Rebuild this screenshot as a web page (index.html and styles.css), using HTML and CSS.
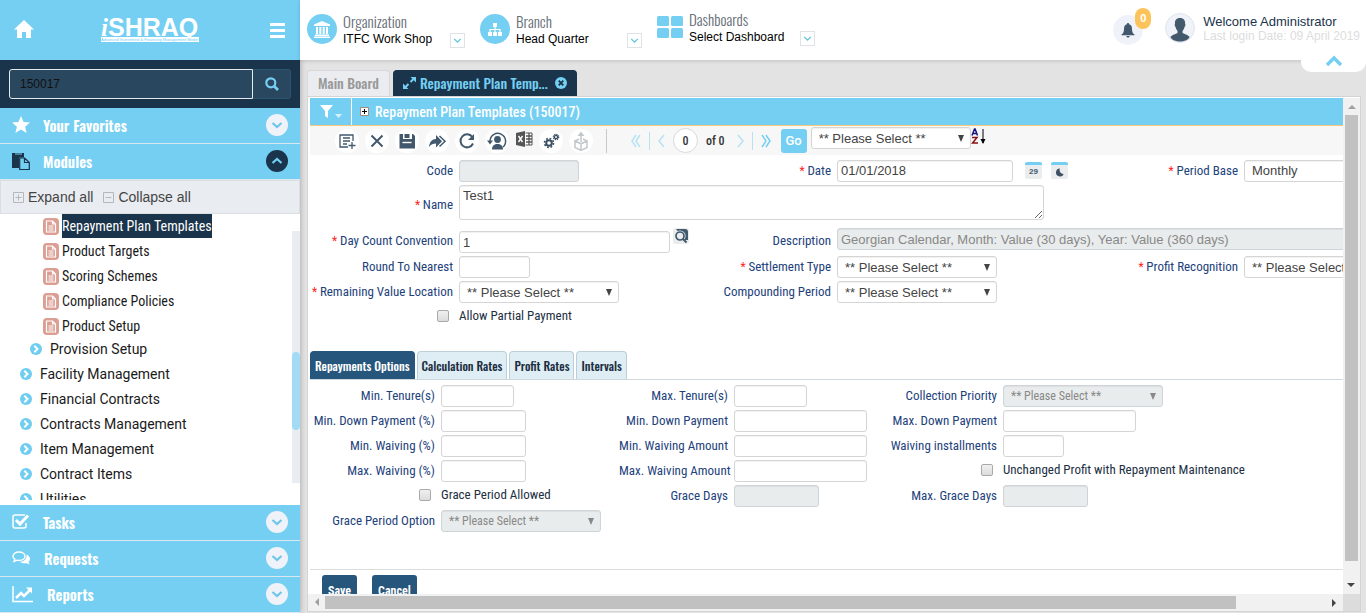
FILE: index.html
```html
<!DOCTYPE html>
<html lang="en">
<head>
<meta charset="utf-8">
<title>iSHRAQ - Repayment Plan Templates</title>
<link rel="stylesheet" href="styles.css">
</head>
<body>
<svg class="defs" aria-hidden="true">
  <symbol id="down" viewBox="0 0 22 22"><path d="M6.500 9l4.500 4 4.500-4" fill="none" stroke="currentColor" stroke-width="2.200"/></symbol>
  <symbol id="up" viewBox="0 0 22 22"><path d="M6.500 13l4.500-4 4.500 4" fill="none" stroke="currentColor" stroke-width="2.200"/></symbol>
  <symbol id="go" viewBox="0 0 12 12"><circle cx="6" cy="6" r="6" fill="#6fcdf1"/><path d="M4.300 2.800l3.200 3.200-3.200 3.200" fill="none" stroke="#fff" stroke-width="2"/></symbol>
  <symbol id="doc" viewBox="0 0 16 17"><rect width="16" height="17" rx="4" fill="#dc9d92"/><path d="M3.500 3h6l3 3v8h-9zM9.500 3v3h3M5.500 8h5M5.500 10h5M5.500 12h5" fill="none" stroke="#fff" stroke-width="1.200"/></symbol>
  <symbol id="tick" viewBox="0 0 12 12"><path d="M3 4.500l3 3 3-3" fill="none" stroke="#5fc6d8" stroke-width="1.300"/></symbol>
</svg>
<div class="app">
  <aside class="side">
    <div class="brand">
      <a href="#" aria-label="Home"><svg width="20" height="18" viewBox="0 0 20 18"><path d="M10 0L0 9.500h3V18h5v-6h4v6h5V9.500h3z" fill="#fff"/></svg></a>
      <div class="logo"><div class="logo-name"><i>i</i>SHRAQ</div><div class="logo-sub">Advanced Investment &amp; Financing Management Model</div></div>
      <button class="bare" aria-label="Menu"><svg width="15" height="15" viewBox="0 0 15 15"><path d="M0 1.500h15M0 7.500h15M0 13.500h15" stroke="#fff" stroke-width="3"/></svg></button>
    </div>
    <form class="search">
      <input type="text" value="150017" aria-label="Search">
      <button type="button" aria-label="Find"><svg width="14" height="14" viewBox="0 0 14 14"><circle cx="5.800" cy="5.800" r="4.500" fill="none" stroke="#74cff2" stroke-width="2.200"/><path d="M9 9l4 4" stroke="#74cff2" stroke-width="2.600"/></svg></button>
    </form>
    <button class="section"><svg width="18" height="18" viewBox="0 0 18 18"><path d="M9 0l2.600 6 6.400.500-4.900 4.200L14.600 17 9 13.600 3.400 17l1.500-6.300L0 6.500 6.400 6z" fill="#fff"/></svg><span>Your Favorites</span><svg class="round" viewBox="0 0 22 22"><use href="#down"/></svg></button>
    <button class="section"><svg width="18" height="18" viewBox="0 0 18 18"><path d="M0 1h12v4.500H7V16H0z" fill="#1a344b"/><path d="M3 2h7" stroke="#74cff2"/><path d="M7.700 6h5l4.600 4.500v7H7.700zM12.500 6v4.500h5" fill="#74cff2" stroke="#1a344b" stroke-width="1.200"/></svg><span>Modules</span><svg class="round open" viewBox="0 0 22 22"><use href="#up"/></svg></button>
    <div class="tree-tools">
      <button class="bare"><svg width="11" height="11" viewBox="0 0 11 11"><path d="M.500.500h10v10H.500zM2.500 5.500h6M5.500 2.500v6" fill="none" stroke="#b4b8bc"/></svg>Expand all</button>
      <button class="bare"><svg width="11" height="11" viewBox="0 0 11 11"><path d="M.500.500h10v10H.500zM2.500 5.500h6" fill="none" stroke="#b4b8bc"/></svg>Collapse all</button>
    </div>
    <div class="tree">
      <ul class="leaves">
        <li><svg><use href="#doc"/></svg><a href="#" class="current">Repayment Plan Templates</a></li>
        <li><svg><use href="#doc"/></svg><a href="#">Product Targets</a></li>
        <li><svg><use href="#doc"/></svg><a href="#">Scoring Schemes</a></li>
        <li><svg><use href="#doc"/></svg><a href="#">Compliance Policies</a></li>
        <li><svg><use href="#doc"/></svg><a href="#">Product Setup</a></li>
      </ul>
      <ul class="branches">
        <li class="nested"><svg><use href="#go"/></svg><a href="#">Provision Setup</a></li>
        <li><svg><use href="#go"/></svg><a href="#">Facility Management</a></li>
        <li><svg><use href="#go"/></svg><a href="#">Financial Contracts</a></li>
        <li><svg><use href="#go"/></svg><a href="#">Contracts Management</a></li>
        <li><svg><use href="#go"/></svg><a href="#">Item Management</a></li>
        <li><svg><use href="#go"/></svg><a href="#">Contract Items</a></li>
        <li><svg><use href="#go"/></svg><a href="#">Utilities</a></li>
      </ul>
      <div class="tree-bar"><div class="tree-thumb"></div></div>
    </div>
    <button class="section"><svg width="18" height="18" viewBox="0 0 18 18"><path d="M13 2H3Q1 2 1 4v9q0 2 2 2h9q2 0 2-2v-3" fill="none" stroke="#fff" stroke-width="1.500"/><path d="M4 7l4 4 8-8.500" fill="none" stroke="#fff" stroke-width="3"/></svg><span>Tasks</span><svg class="round" viewBox="0 0 22 22"><use href="#down"/></svg></button>
    <button class="section"><svg width="19" height="18" viewBox="0 0 19 18"><path d="M7 3c3.500 0 6 1.900 6 4.300S10.500 11.500 7 11.500c-.8 0-1.500-.1-2-.3L2 12.500l.9-2.200C1.700 9.500 1 8.500 1 7.300 1 4.900 3.500 3 7 3z" fill="none" stroke="#fff" stroke-width="1.400"/><path d="M14.500 5.500c4.500 2 4.200 6 1.900 7.500l1.400 2.500-3.300-1.300c-3 .5-5.200-.2-6.200-1.400 3.800-.3 6.600-2.600 6.200-7.300z" fill="#fff"/></svg><span>Requests</span><svg class="round" viewBox="0 0 22 22"><use href="#down"/></svg></button>
    <button class="section"><svg width="22" height="18" viewBox="0 0 22 18"><path d="M1 1v15.500h20" fill="none" stroke="#fff" stroke-width="1.500"/><path d="M4 13l5-5 3 3 6-6" fill="none" stroke="#fff" stroke-width="2.600"/><path d="M14 2.500h6v6z" fill="#fff"/></svg><span>Reports</span><svg class="round" viewBox="0 0 22 22"><use href="#down"/></svg></button>
  </aside>

  <div class="body">
    <header class="top">
      <div class="pick org"><svg width="30" height="30" viewBox="0 0 30 30"><circle cx="15" cy="15" r="15" fill="#74cff2"/><path d="M15 7l8 3.500V12H7v-1.500zM9 13h2v7H9zM12.300 13h2v7h-2zM15.700 13h2v7h-2zM19 13h2v7h-2zM8 20.500h14V22H8zM7 22.500h16V24H7z" fill="#fff"/></svg>
        <div><div class="pick-name">Organization</div><div class="pick-value">ITFC Work Shop</div></div><button aria-label="Choose organization"><svg><use href="#tick"/></svg></button></div>
      <div class="pick branch"><svg width="30" height="30" viewBox="0 0 30 30"><circle cx="15" cy="15" r="15" fill="#74cff2"/><path d="M13 9h4v4h-4zM8 18h4v4H8zM13 18h4v4h-4zM18 18h4v4h-4z" fill="#fff"/><path d="M15 12v6M10 18v-2.500h10V18" fill="none" stroke="#fff" stroke-width="1.200"/></svg>
        <div><div class="pick-name">Branch</div><div class="pick-value">Head Quarter</div></div><button aria-label="Choose branch"><svg><use href="#tick"/></svg></button></div>
      <div class="pick dash"><svg width="26" height="22" viewBox="0 0 26 22" fill="#74cff2"><rect width="12" height="10" rx="1.500"/><rect x="14" width="12" height="10" rx="1.500"/><rect y="12" width="12" height="10" rx="1.500"/><rect x="14" y="12" width="12" height="10" rx="1.500"/></svg>
        <div><div class="pick-name">Dashboards</div><div class="pick-value">Select Dashboard</div></div><button aria-label="Choose dashboard"><svg><use href="#tick"/></svg></button></div>
      <div class="account">
        <button class="bell" aria-label="Notifications"><svg width="14" height="15" viewBox="0 0 14 15"><path d="M7 0c.8 0 1.200.600 1.200 1.300C10.500 2 11 4 11 6c0 3 .9 4.500 2.500 5.500v.800H.500v-.800C2.100 10.500 3 9 3 6c0-2 .500-4 2.800-4.700C5.800.600 6.200 0 7 0zM5.300 13h3.400c-.3 2-3.100 2-3.400 0z" fill="#42596d"/></svg><span class="count">0</span></button>
        <svg class="avatar" width="30" height="30" viewBox="0 0 30 30"><circle cx="15" cy="15" r="14.500" fill="#eff3f9" stroke="#dfe5ee"/><path d="M15 5c3.800 0 5.400 2.400 5.100 6 .6.300.4 2.300-.5 2.800-.3 1.800-1 3-2 3.900v2.300c3 1.500 5.500 2 7 4C22 30 8 30 5.400 24c1.500-2 4.100-2.500 7.100-4v-2.300c-1-.9-1.700-2.100-2-3.900-.9-.5-1.100-2.500-.5-2.800C9.600 7.400 11.200 5 15 5z" fill="#42596d"/></svg>
        <div><div class="who">Welcome Administrator</div><div class="last">Last login Date: 09 April 2019</div></div>
      </div>
      <button class="fold" aria-label="Hide header"><svg width="18" height="12" viewBox="0 0 18 12"><path d="M2 10l7-7 7 7" fill="none" stroke="#74cff2" stroke-width="3.400"/></svg></button>
    </header>

    <nav class="tabs">
      <a href="#">Main Board</a>
      <a href="#" class="active"><svg width="13" height="12" viewBox="0 0 13 12"><path d="M7.500 0H13v5.500zM0 6.500V12h5.500z" fill="#74cff2"/><path d="M7.500 5l3-3M2.500 10l3-3" stroke="#74cff2" stroke-width="2"/></svg>Repayment Plan Temp...<svg class="x" width="12" height="12" viewBox="0 0 12 12"><circle cx="6" cy="6" r="6" fill="#74cff2"/><path d="M3.700 3.700l4.600 4.600M8.300 3.700L3.700 8.300" stroke="#1a344b" stroke-width="1.800"/></svg></a>
    </nav>

    <main class="panel">
      <div class="pane">
        <div class="title">
          <button class="bare filter" aria-label="Filter"><svg width="22" height="14" viewBox="0 0 22 14"><path d="M0 0h13L8 6v7l-3-2V6z" fill="#fff"/><path d="M15 9h7l-3.500 4z" fill="#d6f1fc"/></svg></button>
          <svg width="9" height="9" viewBox="0 0 9 9"><path d="M.500.500h8v8h-8z" fill="#fff" stroke="#a08b7c"/><path d="M2 4.500h5M4.500 2v5" stroke="#000"/></svg>
          <h1>Repayment Plan Templates (150017)</h1>
        </div>
        <div class="tools">
          <button class="tool" aria-label="New"><svg viewBox="0 0 24 24"><path d="M18 12V6H5v12h8M8 9h7M8 12h7M8 15h4M17 13v7M13.500 16.500h7" fill="none" stroke="#42596d" stroke-width="1.300"/></svg></button>
          <button class="tool" aria-label="Delete"><svg viewBox="0 0 24 24"><path d="M6.500 6.500l11 11M17.500 6.500l-11 11" stroke="#42596d" stroke-width="2"/></svg></button>
          <button class="tool" aria-label="Save record"><svg viewBox="0 0 24 24"><path d="M4.500 5H8v5h9V5h1l2 2v12.500H4.500z" fill="#42596d"/><path d="M9.500 5h5v4h-5z" fill="#42596d"/><path d="M7.500 13.500h9" stroke="#fff" stroke-width="1.400"/></svg></button>
          <button class="tool" aria-label="Forward"><svg viewBox="0 0 24 24"><path d="M4 18c.5-5 3-8 7-8V6l6 6.300-6 6.200v-4c-3 0-5 .9-7 3.500z" fill="#42596d"/><path d="M14.500 7l5.500 5.300-5.500 5.200" fill="none" stroke="#42596d" stroke-width="1.500"/></svg></button>
          <button class="tool" aria-label="Refresh"><svg viewBox="0 0 24 24"><path d="M17.300 8A6.500 6.500 0 1 0 18 14.500" fill="none" stroke="#42596d" stroke-width="2"/><path d="M19 5v6h-6z" fill="#42596d"/></svg></button>
          <button class="tool" aria-label="User history"><svg viewBox="0 0 24 24"><path d="M5 12a7.800 7.800 0 1 1 13 6" fill="none" stroke="#42596d" stroke-width="1.500"/><path d="M2 11.500h6l-3 4z" fill="#42596d"/><circle cx="12.500" cy="10.500" r="3.400" fill="#42596d"/><path d="M7 20.500c0-4 2.500-5.500 5.500-5.500s5.500 1.500 5.500 5.500z" fill="#42596d"/></svg></button>
          <button class="tool excel" aria-label="Export to Excel"><svg viewBox="0 0 18 24"><path d="M1 4l9-2v16l-9-2z" fill="#555"/><path d="M10.500 4H17v12h-6.500" fill="#fff" stroke="#555"/><path d="M11 7h6M11 10h6M11 13h6M14 4v12" stroke="#555" stroke-width="1.300"/><path d="M3.500 7l4 6M7.500 7l-4 6" stroke="#fff" stroke-width="1.400"/></svg></button>
          <button class="tool" aria-label="Settings"><svg viewBox="0 0 24 24" fill="none" stroke="#3b5063"><circle cx="10" cy="14" r="2.800" stroke-width="2"/><circle cx="10" cy="14" r="4.500" stroke-width="1.600" stroke-dasharray="1.800 1.734"/><circle cx="17" cy="8" r="1.600" stroke-width="1.300"/><circle cx="17" cy="8" r="2.700" stroke-width="1.200" stroke-dasharray="1.200 .920"/></svg></button>
          <button class="tool" aria-label="Upload" disabled><svg viewBox="0 0 24 24"><path d="M6 12l6 2.800 6-2.800v6.500l-6 3-6-3zM12 15v6M6 12l4-2M18 12l-4-2M12 13V5" fill="none" stroke="#c3c8cc" stroke-width="1.500"/><path d="M8.500 7L12 2.500 15.500 7z" fill="#c3c8cc"/></svg></button>
          <div class="nav">
            <button class="bare" aria-label="First"><svg width="10" height="14" viewBox="0 0 10 14"><path d="M5 1L1 7l4 6M9 1L5 7l4 6"/></svg></button>
            <i class="bar"></i>
            <button class="bare" aria-label="Previous"><svg width="7" height="14" viewBox="0 0 7 14"><path d="M6 1L1 7l5 6"/></svg></button>
            <input class="page" type="text" value="0" aria-label="Page">
            <span>of 0</span>
            <button class="bare next-page" aria-label="Next"><svg width="7" height="14" viewBox="0 0 7 14"><path d="M1 1l5 6-5 6"/></svg></button>
            <i class="bar"></i>
            <button class="bare last-page" aria-label="Last"><svg width="10" height="14" viewBox="0 0 10 14"><path d="M1 1l4 6-4 6M5 1l4 6-4 6"/></svg></button>
          </div>
          <button class="go">Go</button>
          <select class="w160" aria-label="Sort by"><option>** Please Select **</option></select>
          <button class="bare sort" aria-label="Sort"><svg width="16" height="18" viewBox="0 0 16 18"><path d="M1 7.500L3.500 1h.6L6.500 7.500M2 5.500h4" fill="none" stroke="#151580" stroke-width="1.500"/><path d="M1 9.500h5L1.500 15H7" fill="none" stroke="#8b1212" stroke-width="1.500"/><path d="M12 1v14" stroke="#000"/><path d="M9.500 11h5L12 16z"/></svg></button>
        </div>

        <form class="form main-form">
          <label class="l" for="code">Code</label><div class="f"><input id="code" class="w120" disabled></div>
          <label class="l req" for="date">Date</label><div class="f"><input id="date" class="w176" value="01/01/2018"><button type="button" class="cal" aria-label="Gregorian date">29</button><button type="button" class="cal" aria-label="Hijri date"><svg width="9" height="9" viewBox="0 0 9 9"><path d="M5 .500A4 4 0 1 0 8.700 6 3.800 3.800 0 0 1 5 .500z" fill="#3d5064"/></svg></button></div>
          <label class="l req" for="base">Period Base</label><div class="f"><select id="base" class="w160"><option>Monthly</option></select></div>

          <label class="l req" for="name">Name</label><div class="f wide"><textarea id="name">Test1</textarea></div>

          <label class="l req" for="dcc">Day Count Convention</label><div class="f lookup"><input id="dcc" class="w211" value="1"><button type="button" class="find" aria-label="Look up"><svg width="16" height="16" viewBox="0 0 16 16"><path d="M3 1h9q3 0 3 3v8h-3z" fill="#42596d"/><circle cx="7" cy="8" r="5.600" fill="#ebeced"/><circle cx="7" cy="8" r="4" fill="none" stroke="#42596d" stroke-width="1.700"/><path d="M10 11l3.500 3.500" stroke="#42596d" stroke-width="2"/></svg></button></div>
          <label class="l" for="desc">Description</label><div class="f rest"><input id="desc" value="Georgian Calendar, Month: Value (30 days), Year: Value (360 days)" disabled></div>

          <label class="l" for="round">Round To Nearest</label><div class="f"><input id="round" class="w71"></div>
          <label class="l req" for="settle">Settlement Type</label><div class="f"><select id="settle" class="w160"><option>** Please Select **</option></select></div>
          <label class="l req" for="profit">Profit Recognition</label><div class="f"><select id="profit" class="w160"><option>** Please Select **</option></select></div>

          <label class="l req" for="remain">Remaining Value Location</label><div class="f"><select id="remain" class="w160"><option>** Please Select **</option></select></div>
          <label class="l" for="comp">Compounding Period</label><div class="f"><select id="comp" class="w160"><option>** Please Select **</option></select></div>

          <div class="l first box"><input type="checkbox" id="partial"></div><label class="f check" for="partial">Allow Partial Payment</label>
        </form>

        <div class="subtabs"><button class="on">Repayments Options</button><button>Calculation Rates</button><button>Profit Rates</button><button>Intervals</button></div>

        <form class="form options">
          <label class="l" for="mint">Min. Tenure(s)</label><div class="f"><input id="mint" class="w73"></div>
          <label class="l" for="maxt">Max. Tenure(s)</label><div class="f"><input id="maxt" class="w73"></div>
          <label class="l" for="prio">Collection Priority</label><div class="f"><select id="prio" class="w160" disabled><option>** Please Select **</option></select></div>

          <label class="l" for="mindp">Min. Down Payment (%)</label><div class="f"><input id="mindp" class="w85"></div>
          <label class="l" for="mind">Min. Down Payment</label><div class="f"><input id="mind" class="w133"></div>
          <label class="l" for="maxd">Max. Down Payment</label><div class="f"><input id="maxd" class="w133"></div>

          <label class="l" for="minwp">Min. Waiving (%)</label><div class="f"><input id="minwp" class="w85"></div>
          <label class="l" for="minw">Min. Waiving Amount</label><div class="f"><input id="minw" class="w133"></div>
          <label class="l" for="inst">Waiving installments</label><div class="f"><input id="inst" class="w61"></div>

          <label class="l" for="maxwp">Max. Waiving (%)</label><div class="f"><input id="maxwp" class="w85"></div>
          <label class="l" for="maxw">Max. Waiving Amount</label><div class="f"><input id="maxw" class="w133"></div>
          <div class="l box"><input type="checkbox" id="unch"></div><label class="f check" for="unch">Unchanged Profit with Repayment Maintenance</label>

          <div class="l box"><input type="checkbox" id="grace"></div><label class="f check" for="grace">Grace Period Allowed</label>
          <label class="l" for="gdays">Grace Days</label><div class="f"><input id="gdays" class="w85" disabled></div>
          <label class="l" for="mgd">Max. Grace Days</label><div class="f"><input id="mgd" class="w85" disabled></div>

          <label class="l" for="gopt">Grace Period Option</label><div class="f"><select id="gopt" class="w160" disabled><option>** Please Select **</option></select></div>
        </form>

        <div class="actions"><button>Save</button><button>Cancel</button></div>
      </div>
      <div class="vbar"><i class="arrow"></i><i class="thumb"></i><i class="arrow end"></i></div>
      <div class="hbar"><i class="arrow"></i><i class="thumb"></i><i class="arrow end"></i></div>
      <div class="corner"></div>
    </main>
  </div>
</div>
</body>
</html>
```
FILE: styles.css
```css
* { box-sizing: border-box; }
:root {
  --sky: #74cff2;
  --navy: #1a344b;
  --sans: "Liberation Sans", Arial, sans-serif;
  --cond: "Roboto Condensed", "Liberation Sans Narrow", Roboto, sans-serif;
  --head: Oswald, "Roboto Condensed", "Liberation Sans Narrow", Roboto, sans-serif;
}
body { margin: 0; font: 13px var(--sans); color: #333; overflow: hidden; }
button, input, select, textarea { font: inherit; color: inherit; margin: 0; }
button { padding: 0; border: 0; }
a { color: inherit; text-decoration: none; }
ul { margin: 0; padding: 0; list-style: none; }
.defs { display: none; }
.bare { background: none; display: flex; align-items: center; }

.app { display: flex; height: 100vh; background: #e3e3e3; }

/* Sidebar */
.side { width: 300px; flex: none; display: flex; flex-direction: column; background: #fff; box-shadow: 0 0 6px rgba(0, 0, 0, .3); }
.brand { flex: none; height: 60px; padding: 0 15px 0 14px; display: flex; align-items: center; justify-content: space-between; background: var(--sky); }
.logo { width: 98px; margin-right: 4px; color: #fff; }
.logo-name { font: bold 25px/20px var(--sans); height: 20px; white-space: nowrap; }
.logo-name i { font-family: "Liberation Serif", serif; }
.logo-sub { height: 5px; margin-bottom: 1px; overflow: hidden; background: #fff; color: var(--sky); font-size: 4px; line-height: 5px; white-space: nowrap; }
.search { flex: none; height: 48px; padding: 9px; display: flex; background: var(--navy); }
.search input { flex: 1; min-width: 0; padding: 0 10px; background: #29475f; border: 1px solid #e6e9ec; border-radius: 3px 0 0 3px; color: #111; font-size: 12px; outline: 0; }
.search button { width: 38px; display: flex; align-items: center; justify-content: center; background: #29475f; border: 1px solid #2b5372; border-left: 0; border-radius: 0 3px 3px 0; }
.section { flex: none; height: 36px; padding: 0 12px 2px; display: flex; align-items: center; gap: 13px; background: var(--sky); border-bottom: 1px solid #dbe7ee; color: #fff; font: 600 15px var(--head); text-align: left; }
.section span { flex: 1; }
.round { width: 22px; height: 22px; border-radius: 50%; background: #eff3f9; color: #6ec6e8; }
.round.open { background: var(--navy); color: var(--sky); }
.tree-tools { flex: none; height: 34px; padding: 0 12px; display: flex; align-items: center; gap: 10px; background: #e9ecf1; border: 1px solid #dcdfe2; font-size: 14px; color: #444; }
.tree-tools .bare { gap: 4px; }
.tree { flex: 1; min-height: 0; margin-bottom: 5px; overflow: hidden; position: relative; color: #1a1a1a; }
.tree li { display: flex; align-items: center; }
.leaves li { height: 25px; padding: 0 0 1px 43px; gap: 3px; font: 14px/24px var(--cond); }
.leaves svg { width: 16px; height: 17px; }
.current { background: var(--navy); color: #fff; }
.branches { display: flex; flex-direction: column; gap: 5px; font: 14px/20px Roboto, sans-serif; }
.branches li { height: 20px; padding-left: 20px; gap: 8px; }
.branches .nested { padding-left: 30px; }
.branches svg { width: 12px; height: 12px; }
.tree-bar { position: absolute; right: 0; top: 17px; bottom: 17px; width: 8px; background: #e9ecf1; }
.tree-thumb { height: 31%; position: relative; top: 48%; background: #a3dbf4; border-radius: 4px; }

/* Header */
.body { flex: 1; min-width: 0; display: flex; flex-direction: column; }
.top { flex: none; height: 60px; padding: 0 6px 0 7px; display: flex; align-items: center; background: #fff; position: relative; box-shadow: 0 1px 4px rgba(0, 0, 0, .15); color: #000; }
.pick { display: flex; align-items: center; gap: 6px; height: 36px; }
.pick > svg { margin-bottom: 3px; }
.pick > div { flex: 1; }
.pick-name { font: 300 15px/18px var(--head); color: #666e78; }
.pick-value { font-size: 12px; line-height: 18px; }
.pick button { align-self: flex-end; width: 15px; height: 15px; background: #fff; border: 1px solid #dfe3e6; display: flex; }
.pick button svg { width: 13px; height: 13px; }
.org { width: 158px; margin-right: 15px; }
.branch { width: 162px; margin-right: 15px; }
.dash { width: 158px; margin-bottom: 4px; }
.account { margin: 0 0 4px auto; display: flex; align-items: center; gap: 8px; }
.bell { position: relative; width: 30px; height: 30px; margin: 4px 14px 0 0; border-radius: 50%; background: #eff3f9; display: flex; align-items: center; justify-content: center; }
.count { position: absolute; right: -8px; top: -7px; width: 16px; height: 21px; border-radius: 8px; background: #fdc35b; color: #fff; font: bold 11px/21px var(--sans); }
.who { font-size: 13px; line-height: 15px; color: #1a344b; }
.last { font-size: 12px; line-height: 14px; color: #ddd; }
.fold { position: absolute; right: 0; top: 54px; width: 65px; height: 18px; padding-bottom: 5px; background: #fff; border-radius: 0 0 10px 10px; display: flex; align-items: center; justify-content: center; }

/* Page tabs */
.tabs { flex: none; display: flex; align-items: flex-end; gap: 3px; height: 36px; padding-left: 7px; font: 500 14px/24px var(--head); }
.tabs a { height: 26px; padding: 0 10px 2px; background: #eaecf0; border: 1px solid #d6d8da; border-bottom: 0; border-radius: 4px 4px 0 0; color: #999; display: flex; align-items: center; white-space: nowrap; }
.tabs .active { background: var(--navy); border-color: var(--navy); color: var(--sky); gap: 4px; padding: 0 9px 1px; }
.x { margin-left: 3px; }

/* Panel with its scroll bars */
.panel { flex: 1; min-height: 0; margin: 0 5px 1px 7px; display: grid; grid-template: minmax(0, 1fr) 17px / minmax(0, 1fr) 17px; background: #fff; border: 1px solid #d4d4d4; padding-top: 1px; }
.pane { overflow: hidden; padding-left: 2px; display: flex; flex-direction: column; }
.vbar, .hbar { display: flex; align-items: center; background: #f1f1f1; }
.vbar { flex-direction: column; }
.corner { background: #dcdcdc; }
.thumb { background: #c1c1c1; }
.vbar .thumb { width: 13px; height: 90%; }
.hbar .thumb { height: 13px; width: 88%; }
.arrow { flex: none; width: 17px; height: 17px; display: flex; align-items: center; justify-content: center; }
.arrow::after { content: ""; border: 4px solid transparent; border-top-width: 0; border-bottom-color: #a0a0a0; }
.arrow.end::after { border-bottom-color: #444; }
.vbar .end { margin-top: auto; transform: rotate(180deg); }
.hbar .arrow { transform: rotate(-90deg); }
.hbar .end { margin-left: auto; transform: rotate(90deg); }

.title { flex: none; height: 28px; display: flex; align-items: center; gap: 6px; padding-left: 10px; background: var(--sky); border-bottom: 1px solid #fcc877; }
.title h1 { margin: 0; font: 500 14px var(--cond); color: #fff; }
.filter { height: 27px; padding-right: 9px; margin-right: 2px; border-right: 1px solid #fff; }

.tools { flex: none; height: 29px; padding-left: 25px; display: flex; align-items: center; gap: 6px; background: #f7f7f7; }
.tool { width: 24px; height: 24px; border-radius: 50%; background: #fff; }
.tool svg { width: 100%; height: 100%; display: block; }
.excel { width: 18px; background: none; }
.nav { display: flex; align-items: center; gap: 8px; height: 24px; margin-left: 7px; padding-left: 24px; border-left: 1px solid #c9c9c9; font: 500 12px var(--cond); }
.nav svg { fill: none; stroke: #b5e3f5; stroke-width: 1.500; display: block; }
.nav .last-page svg { stroke: var(--sky); }
.next-page { margin-left: 4px; }
.bar { width: 1px; height: 18px; background: #b5e3f5; }
.page { width: 25px; height: 25px; padding: 0; text-align: center; border: 1px solid #d9d9d9; border-radius: 50%; background: #fff; }
.go { width: 26px; height: 24px; margin-left: 4px; border-radius: 3px; background: var(--sky); color: #fff; font: 500 13px Roboto, sans-serif; }
.tools select { margin: 0 -6px 5px -2px; }
.sort { margin-bottom: 8px; }

/* Forms */
.form { flex: none; display: grid; column-gap: 6px; row-gap: 3px; align-items: center; grid-auto-rows: 22px; }
.main-form { grid-template-columns: 143px 238px 128px 274px 121px 250px; grid-template-rows: 23px 40px 25px; padding: 4px 0 23px; }
.options { grid-template-columns: 125px 172px 109px 133px 124px 250px; padding: 5px 0 37px; }
.l { text-align: right; color: #1d427c; font: 13px/16px var(--cond); white-space: nowrap; }
.req::before { content: "* "; color: #f22; font-size: 12px; }
.f { display: flex; align-items: center; white-space: nowrap; }
.wide { grid-column: 2 / -1; }
.rest { grid-column: 4 / -1; align-self: start; }
.first { grid-column: 1; }
.check { color: #1c2f42; font: 13px/16px var(--cond); }
.box, .check { padding-bottom: 3px; }
.form input:not([type="checkbox"]), select, textarea { height: 22px; padding: 0 3px; border: 1px solid #d5d5d5; border-radius: 3px; background: #fff; color: #444; box-shadow: inset 0 1px 1px rgba(0, 0, 0, .06); }
textarea { width: 585px; height: 35px; padding: 2px 3px; margin-bottom: 5px; display: block; resize: both; }
select { appearance: none; background: #fff url("data:image/svg+xml,%3Csvg xmlns='http://www.w3.org/2000/svg' width='6' height='7'%3E%3Cpath d='M0 0h6L3 7z' fill='%23444'/%3E%3C/svg%3E") no-repeat right 6px center; }
.tools select, .form select { padding: 0 7px; }
.form input:disabled, select:disabled { background-color: #e8ecec; border-color: #cfd4d8; color: #888; opacity: 1; }
select:disabled { background-image: url("data:image/svg+xml,%3Csvg xmlns='http://www.w3.org/2000/svg' width='6' height='7'%3E%3Cpath d='M0 0h6L3 7z' fill='%23888'/%3E%3C/svg%3E"); font: 12px var(--cond); }
.rest input { width: 100%; }
input[type="checkbox"] { appearance: none; width: 12px; height: 12px; margin: 0 4px 0 0; border: 1px solid #a9a9a9; border-radius: 2px; background: linear-gradient(#f0f0f0, #dcdcdc); vertical-align: middle; }
.cal { width: 17px; height: 17px; margin-left: 9px; border-top: 3px solid var(--sky); border-radius: 2px; background: #ebeced; color: #42596d; font: bold 8px/14px var(--sans); display: flex; align-items: center; justify-content: center; }
.cal:first-of-type { margin-left: 12px; }
.lookup { align-self: stretch; align-items: flex-end; }
.find { align-self: flex-start; width: 16px; height: 16px; margin-left: 3px; background: #ebeced; border-radius: 2px; }
.find svg { display: block; }
.w61 { width: 61px; } .w71 { width: 71px; } .w73 { width: 73px; } .w85 { width: 85px; } .w120 { width: 120px; }
.w133 { width: 133px; } .w160 { width: 160px; } .w176 { width: 176px; } .w211 { width: 211px; }

.subtabs { flex: none; display: flex; gap: 2px; border-bottom: 1px solid #cfd8dc; }
.subtabs button { height: 28px; padding: 0 4px; background: #dfedf4; border: 1px solid #bccfd9; border-bottom: 0; border-radius: 4px 4px 0 0; color: #1c2f42; font: 500 12px var(--head); }
.subtabs .on { background: #27567c; border-color: #27567c; color: #fff; }

.actions { flex: none; display: flex; gap: 15px; padding: 5px 12px; border-top: 1px solid #dcdcdc; }
.actions button { height: 32px; padding: 0 6px; border-radius: 3px; background: #27567c; color: #fff; font: bold 12px var(--cond); }
```
